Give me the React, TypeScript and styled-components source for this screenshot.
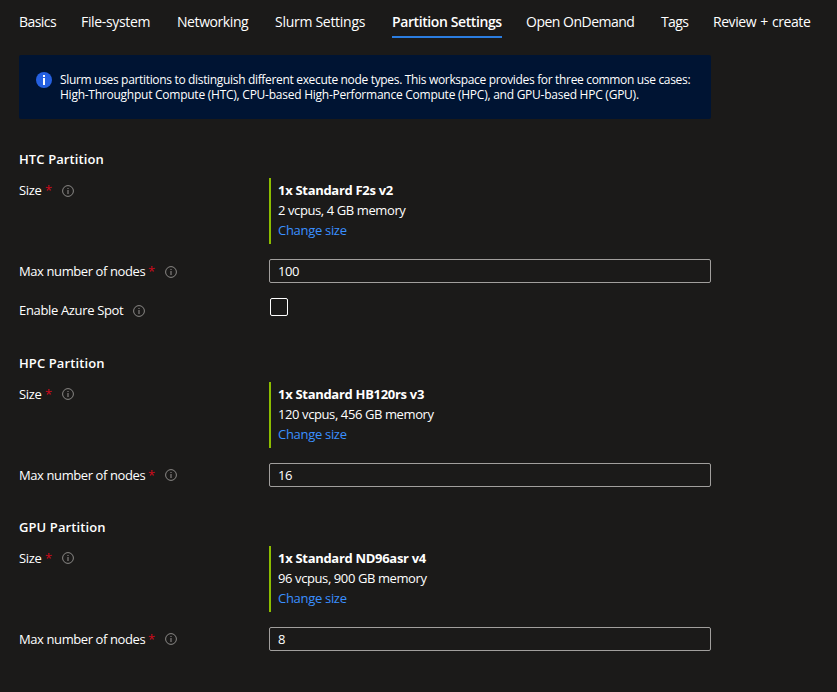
import React from "react";
import styled, { createGlobalStyle } from "styled-components";

const GlobalStyle = createGlobalStyle`
  * { box-sizing: border-box; }
  body {
    margin: 0;
    background: #1b1a19;
    color: #fff;
    font-family: "Open Sans", "Noto Sans", sans-serif;
    font-size: 13px;
    line-height: 20px;
  }
`;

const Page = styled.main`
  min-height: 692px;
  padding: 11px 0 0 19px;
  overflow: hidden;
`;

const TabList = styled.nav`
  display: flex;
  height: 27px;
`;

const Tab = styled.a<{ $slot: number; $tracking: number; $wordGap?: number }>`
  flex: 0 0 ${(p) => p.$slot}px;
  color: #fff;
  font-size: 14px;
  line-height: 22px;
  white-space: nowrap;
  text-decoration: none;
  letter-spacing: ${(p) => p.$tracking}px;
  word-spacing: ${(p) => p.$wordGap ?? 0}px;
`;

const ActiveTab = styled(Tab)`
  font-weight: 600;

  span {
    display: block;
    width: 110px;
    height: 27px;
    border-bottom: 2px solid #2b7de0;
  }
`;

const Banner = styled.section`
  display: flex;
  width: 692px;
  height: 64px;
  margin-top: 17px;
  padding: 17px 0 0 17px;
  gap: 8px;
  border-radius: 2px;
  background: #001433;
`;

const BannerText = styled.p`
  margin: 0;
  font-size: 12px;
  line-height: 15px;
  white-space: nowrap;
`;

const Line = styled.span<{ $tracking: number }>`
  display: block;
  letter-spacing: ${(p) => p.$tracking}px;
`;

const Partitions = styled.div`
  display: flex;
  flex-direction: column;
  gap: 30px;
  margin-top: 30px;
`;

const Heading = styled.h2`
  margin: 0 0 9px;
  font-size: 13px;
  font-weight: 600;
  line-height: 20px;
  letter-spacing: 0.1px;
`;

const Fields = styled.div`
  display: flex;
  flex-direction: column;
  gap: 15px;
`;

const Row = styled.div<{ $minHeight?: number }>`
  display: grid;
  grid-template-columns: 250px 442px;
  align-items: start;
  min-height: ${(p) => p.$minHeight ?? 24}px;
`;

const Label = styled.div`
  display: flex;
  align-items: center;
  height: 24px;
  white-space: nowrap;
`;

const LabelText = styled.span<{ $width: number; $tracking: number }>`
  width: ${(p) => p.$width}px;
  letter-spacing: ${(p) => p.$tracking}px;
`;

const Required = styled.span`
  width: 16px;
  margin-left: -1px;
  margin-right: 1px;
  color: #d10a1c;
`;

const SizeCard = styled.div`
  height: 66px;
  padding: 2px 0 0 7px;
  border-left: 2px solid #8cbd00;
  white-space: nowrap;
`;

const SizeName = styled.div`
  font-weight: 700;
  letter-spacing: -0.3px;
`;

const Spec = styled.div`
  letter-spacing: -0.4px;
`;

const ChangeLink = styled.a`
  display: block;
  color: #3a90ff;
  text-decoration: none;
  letter-spacing: -0.3px;
`;

const NumberInput = styled.input`
  width: 442px;
  height: 24px;
  padding: 0 8px;
  border: 1px solid #a19f9d;
  border-radius: 2px;
  outline: none;
  background: #1b1a19;
  color: #fff;
  font: inherit;
  letter-spacing: -0.4px;
`;

const Checkbox = styled.input`
  appearance: none;
  width: 18px;
  height: 18px;
  margin: 0 0 0 1px;
  border: 1px solid #fff;
  border-radius: 2px;
`;

const InfoGlyph = styled.svg<{ $drop?: boolean }>`
  margin-top: ${(p) => (p.$drop ? 2 : 0)}px;
`;

const InfoIcon = ({ drop }: { drop?: boolean }) => (
  <InfoGlyph $drop={drop} width="12" height="12" viewBox="0 0 12 12" fill="none">
    <circle cx="6" cy="6" r="5.4" stroke="#8a8886" strokeWidth="1" />
    <path d="M6 5v4M6 3v1" stroke="#8a8886" strokeWidth="1.1" />
  </InfoGlyph>
);

const BannerIcon = () => (
  <svg width="16" height="16" viewBox="0 0 16 16">
    <circle cx="8" cy="8" r="8" fill="#2560e0" />
    <path d="M7 3h2v2H7zM7 6h2v7H7z" fill="#fff" />
  </svg>
);

type Partition = {
  title: string;
  name: string;
  spec: string;
  nodes: string;
  spot?: boolean;
};

const partitions: Partition[] = [
  { title: "HTC Partition", name: "1x Standard F2s v2", spec: "2 vcpus, 4 GB memory", nodes: "100", spot: true },
  { title: "HPC Partition", name: "1x Standard HB120rs v3", spec: "120 vcpus, 456 GB memory", nodes: "16" },
  { title: "GPU Partition", name: "1x Standard ND96asr v4", spec: "96 vcpus, 900 GB memory", nodes: "8" },
];

export default function App() {
  return (
    <>
      <GlobalStyle />
      <Page>
        <TabList>
          <Tab $slot={62} $tracking={-0.55}>Basics</Tab>
          <Tab $slot={96} $tracking={-0.34}>File-system</Tab>
          <Tab $slot={98} $tracking={-0.42}>Networking</Tab>
          <Tab $slot={117} $tracking={-0.28}>Slurm Settings</Tab>
          <ActiveTab $slot={134} $tracking={-0.4}><span>Partition Settings</span></ActiveTab>
          <Tab $slot={135} $tracking={-0.5}>Open OnDemand</Tab>
          <Tab $slot={52} $tracking={-0.65}>Tags</Tab>
          <Tab $slot={100} $tracking={-0.44} $wordGap={1}>Review + create</Tab>
        </TabList>
        <Banner>
          <BannerIcon />
          <BannerText>
            <Line $tracking={-0.33}>Slurm uses partitions to distinguish different execute node types. This workspace provides for three common use cases:</Line>
            <Line $tracking={-0.25}>High-Throughput Compute (HTC), CPU-based High-Performance Compute (HPC), and GPU-based HPC (GPU).</Line>
          </BannerText>
        </Banner>
        <Partitions>
          {partitions.map((p) => (
            <section key={p.title}>
              <Heading>{p.title}</Heading>
              <Fields>
                <Row>
                  <Label>
                    <LabelText $width={27} $tracking={-0.3}>Size</LabelText>
                    <Required>*</Required>
                    <InfoIcon drop={p.spot} />
                  </Label>
                  <SizeCard>
                    <SizeName>{p.name}</SizeName>
                    <Spec>{p.spec}</Spec>
                    <ChangeLink>Change size</ChangeLink>
                  </SizeCard>
                </Row>
                <Row>
                  <Label>
                    <LabelText $width={130} $tracking={-0.4}>Max number of nodes</LabelText>
                    <Required>*</Required>
                    <InfoIcon drop={p.spot} />
                  </Label>
                  <NumberInput defaultValue={p.nodes} />
                </Row>
                {p.spot && (
                  <Row $minHeight={25}>
                    <Label>
                      <LabelText $width={114} $tracking={-0.34}>Enable Azure Spot</LabelText>
                      <InfoIcon drop />
                    </Label>
                    <Checkbox type="checkbox" />
                  </Row>
                )}
              </Fields>
            </section>
          ))}
        </Partitions>
      </Page>
    </>
  );
}
